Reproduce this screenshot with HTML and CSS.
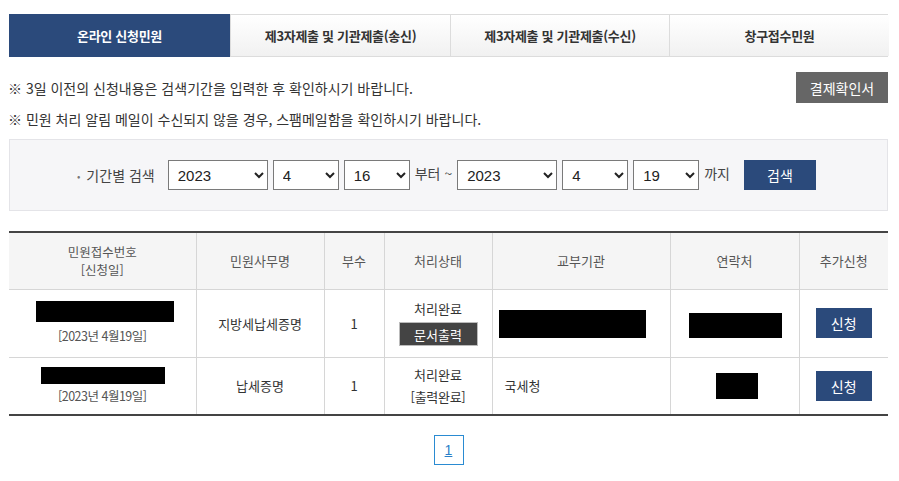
FILE: index.html
```html
<!DOCTYPE html>
<html lang="ko">
<head>
<meta charset="utf-8">
<title>온라인 신청민원</title>
<link rel="stylesheet" href="styles.css">
</head>
<body>
<div class="wrap">
  <div class="tabs">
    <div class="tab active">온라인 신청민원</div>
    <div class="tab">제3자제출 및 기관제출(송신)</div>
    <div class="tab">제3자제출 및 기관제출(수신)</div>
    <div class="tab">창구접수민원</div>
  </div>

  <div class="notice">
    <div class="notes">
      <p>※ 3일 이전의 신청내용은 검색기간을 입력한 후 확인하시기 바랍니다.</p>
      <p>※ 민원 처리 알림 메일이 수신되지 않을 경우, 스팸메일함을 확인하시기 바랍니다.</p>
    </div>
    <button class="btn-gray">결제확인서</button>
  </div>

  <div class="search">
    <span class="label"><span class="dot">•</span> 기간별 검색</span>
    <select class="sel-y"><option>2023</option></select>
    <select class="sel-m"><option>4</option></select>
    <select class="sel-m"><option>16</option></select>
    <span class="txt">부터 ~</span>
    <select class="sel-y"><option>2023</option></select>
    <select class="sel-m"><option>4</option></select>
    <select class="sel-m"><option>19</option></select>
    <span class="txt until">까지</span>
    <button class="btn-navy">검색</button>
  </div>

  <table class="list">
    <colgroup>
      <col style="width:187px"><col style="width:128px"><col style="width:60px"><col style="width:108px"><col style="width:178px"><col style="width:129px"><col style="width:89px">
    </colgroup>
    <thead>
      <tr>
        <th><span class="th-line">민원접수번호</span><span class="th-line">[신청일]</span></th>
        <th>민원사무명</th>
        <th>부수</th>
        <th>처리상태</th>
        <th>교부기관</th>
        <th>연락처</th>
        <th>추가신청</th>
      </tr>
    </thead>
    <tbody>
      <tr class="r1">
        <td><span class="redact r1a"></span><span class="date">[2023년 4월19일]</span></td>
        <td>지방세납세증명</td>
        <td>1</td>
        <td><span class="status">처리완료</span><button class="btn-dark">문서출력</button></td>
        <td class="left"><span class="redact r1e"></span></td>
        <td><span class="redact r1f"></span></td>
        <td><button class="btn-apply">신청</button></td>
      </tr>
      <tr class="r2">
        <td><span class="redact r2a"></span><span class="date">[2023년 4월19일]</span></td>
        <td>납세증명</td>
        <td>1</td>
        <td><span class="status">처리완료</span><span class="status2">[출력완료]</span></td>
        <td class="left org">국세청</td>
        <td><span class="redact r2f"></span></td>
        <td><button class="btn-apply">신청</button></td>
      </tr>
    </tbody>
  </table>

  <div class="paging">
    <a href="#" class="page">1</a>
  </div>
</div>
</body>
</html>
```

FILE: styles.css
```css
* { box-sizing: border-box; }
html, body { margin: 0; padding: 0; background: #fff; }
body {
  font-family: "Noto Sans CJK KR", "Noto Sans", sans-serif;
  font-size: 13px;
  color: #333;
}
.wrap {
  width: 899px;
  padding: 14px 11px 0 9px;
}
.tabs {
  display: grid;
  grid-template-columns: 220px 220px 219px 220px;
  height: 43px;
  border: 1px solid #dcdcdc;
}
.tab {
  display: flex;
  align-items: center;
  justify-content: center;
  font-weight: bold;
  font-size: 13px;
  color: #333;
  background: linear-gradient(#ffffff, #f1f1f1);
  border-left: 1px solid #dcdcdc;
  letter-spacing: -0.3px;
}
.tab:first-child { border-left: none; }
.tab.active {
  background: #2b4a7b;
  color: #fff;
  margin: -1px 0 -1px -1px;
}
.notice {
  display: flex;
  justify-content: space-between;
  align-items: flex-start;
}
.notes { padding-top: 21px; margin-left: -1px; }
.notes p {
  margin: 0 0 11px;
  line-height: 20px;
  font-size: 14px;
  color: #333;
}
.btn-gray {
  margin-top: 15px;
  width: 92px;
  height: 31px;
  border: none;
  background: #666;
  color: #fff;
  font-family: inherit;
  font-size: 14px;
  padding: 0;
}
.search {
  margin-top: -1px;
  height: 72px;
  background: #f6f6f8;
  border: 1px solid #e4e4e8;
  display: flex;
  align-items: center;
  justify-content: center;
  padding-right: 4px;
  gap: 5px;
}
.label {
  margin-right: 8px;
  font-size: 14px;
  color: #444;
}
.dot { color: #777; font-size: 10px; position: relative; top: -1px; margin-right: 2px; }
select {
  height: 30px;
  border: 1px solid #7a7a7a;
  border-radius: 0;
  background-color: #fff;
  font-family: "Liberation Sans", Arial, sans-serif;
  font-size: 15px;
  color: #222;
  padding: 0 0 0 5px;
  margin: 0;
}
.sel-y { width: 100px; }
.sel-m { width: 66px; }
.txt { font-size: 14px; color: #444; padding-bottom: 4px; }
.until { margin-right: 9px; }
.btn-navy {
  width: 72px;
  height: 30px;
  border: none;
  background: #2b4a7b;
  color: #fff;
  font-family: inherit;
  font-size: 14px;
  padding: 0;
  margin-bottom: 1px;
}
.list {
  margin-top: 20px;
  width: 879px;
  border-collapse: collapse;
  table-layout: fixed;
  border-top: 2px solid #444;
  border-bottom: 2px solid #444;
}
.list th {
  background: #f5f5f5;
  font-weight: normal;
  color: #555;
  font-size: 13px;
  height: 57px;
  line-height: 18px;
  border-left: 1px solid #d6d6d6;
  border-bottom: 1px solid #d6d6d6;
  padding: 0;
}
.th-line { display: block; font-size: 12.5px; line-height: 18px; }
.list td {
  text-align: center;
  border-left: 1px solid #d6d6d6;
  border-bottom: 1px solid #d6d6d6;
  padding: 0;
  font-size: 13px;
  color: #333;
  vertical-align: middle;
}
.list th:first-child, .list td:first-child { border-left: none; }
.list tr.r1 td { height: 68px; }
.list tr.r2 td { height: 58px; }
.list td.left { text-align: left; padding-left: 6px; }
.list td.org { padding-left: 12px; }
.redact { display: block; background: #000; }
.r1a { width: 138px; height: 21px; margin: 0 0 5px 27px; }
.r2a { width: 124px; height: 17px; margin: 0 0 3px 32px; }
.r1e { width: 147px; height: 28px; margin-top: 2px; }
.r1f { width: 93px; height: 25px; margin: 5px 0 0 18px; }
.r2f { width: 42px; height: 26px; margin: 1px 0 0 45px; }
.date { display: block; color: #555; font-size: 12.5px; letter-spacing: -0.5px; line-height: 18px; }
.status { display: block; line-height: 18px; }
.status2 { display: block; line-height: 18px; margin-top: 4px; letter-spacing: -0.3px; }
.btn-dark {
  display: block;
  margin: 4px auto 0;
  width: 79px;
  height: 24px;
  border: 1px solid #bbb;
  background: #444;
  color: #fff;
  font-family: inherit;
  font-size: 13px;
  padding: 0;
}
.btn-apply {
  width: 56px;
  height: 30px;
  border: none;
  background: #2b4a7b;
  color: #fff;
  font-family: inherit;
  font-size: 14px;
  padding: 0;
}
.paging {
  display: flex;
  justify-content: center;
  padding-top: 19px;
}
.page {
  display: flex;
  align-items: center;
  justify-content: center;
  width: 30px;
  height: 30px;
  border: 1px solid #2a8bd2;
  color: #2a7fc8;
  font-family: "Liberation Sans", Arial, sans-serif;
  font-size: 14px;
  text-decoration: underline;
}
```
